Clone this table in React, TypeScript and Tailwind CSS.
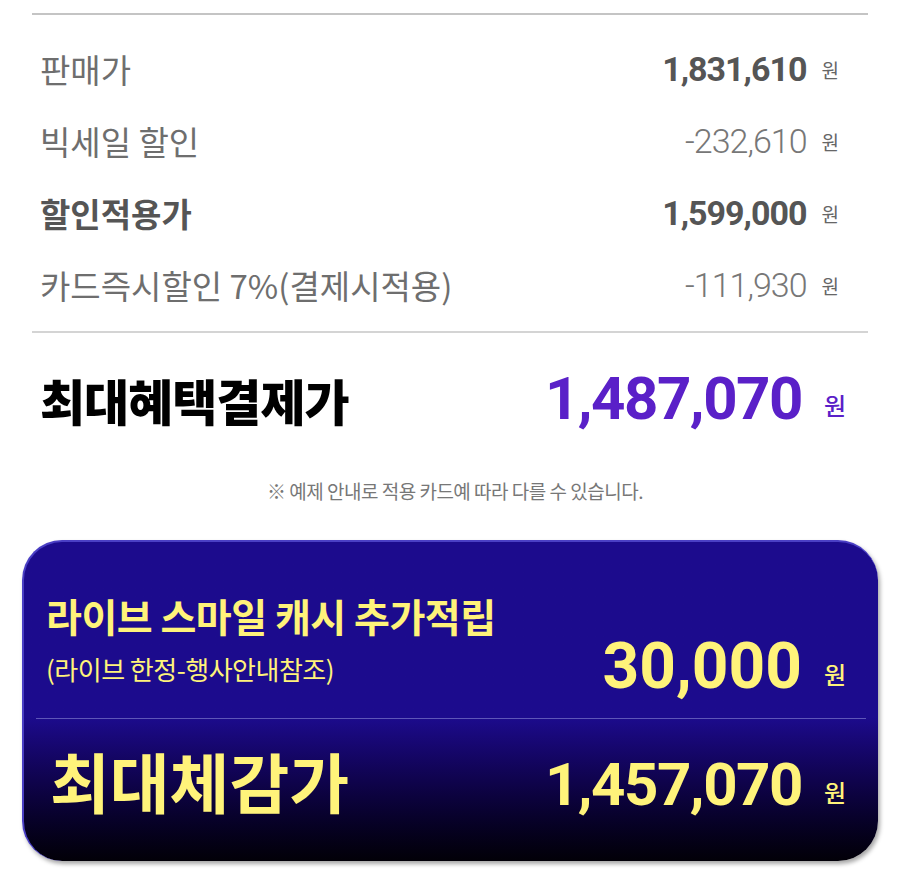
const KR = "font-['Noto_Sans_CJK_KR','Noto_Sans',sans-serif]";
const NUM = "font-['Roboto','Noto_Sans_CJK_KR',sans-serif]";

interface PriceRow {
  label: string;
  amount: string;
  strongLabel?: boolean;
  strongAmount?: boolean;
}

const rows: PriceRow[] = [
  { label: '판매가', amount: '1,831,610', strongAmount: true },
  { label: '빅세일 할인', amount: '-232,610' },
  { label: '할인적용가', amount: '1,599,000', strongLabel: true, strongAmount: true },
  { label: '카드즉시할인 7%(결제시적용)', amount: '-111,930' },
];

export default function App() {
  return (
    <div className={`w-[900px] h-[883px] bg-white overflow-hidden ${KR}`}>
      <div className="px-8 pt-[13px]">
        <div className="border-t-2 border-[#c4c4c4]" />

        <div className="pt-[18px] pb-[10px]">
          {rows.map((row) => (
            <div key={row.label} className="h-[72px] flex items-center justify-between pl-2 pr-[29px]">
              <span
                className={`text-[33px] leading-none ${
                  row.strongLabel ? 'font-bold text-[#555]' : 'text-[#6e6e6e]'
                }`}
              >
                {row.label}
              </span>
              <span className="flex items-center gap-[15px]">
                <span
                  className={`${NUM} text-[34px] leading-none tracking-[-1px] ${
                    row.strongAmount ? 'font-bold text-[#555]' : 'font-light text-[#777]'
                  }`}
                >
                  {row.amount}
                </span>
                <span className="text-[19px] leading-none text-[#666]">원</span>
              </span>
            </div>
          ))}
        </div>

        <div className="border-t-2 border-[#d4d4d4]" />

        <div className="mt-[36px] h-[60px] flex items-center justify-between pl-2 pr-[22px]">
          <span className="text-[49px] font-black leading-none text-black tracking-[-1px]">최대혜택결제가</span>
          <span className="flex items-center gap-[22px] text-[#5a20c8]">
            <span className={`${NUM} text-[60px] font-bold leading-none tracking-[-1.5px]`}>1,487,070</span>
            <span className="text-[24px] font-medium leading-none mt-[12px]">원</span>
          </span>
        </div>
      </div>

      <p className="mt-[52px] text-center text-[19px] leading-none text-[#777] tracking-[-0.5px] pl-[10px]">
        ※ 예제 안내로 적용 카드예 따라 다를 수 있습니다.
      </p>

      <div className="mx-[22px] mt-[40px] h-[321px] rounded-[40px] bg-gradient-to-b from-[#1c0b8d] from-55% to-[#020008] border-t-2 border-l-2 border-[#4a3fc4] shadow-[2px_3px_4px_rgba(0,0,0,0.35)] text-[#fff37a] flex flex-col overflow-hidden">
        <div className="h-[176px] flex justify-between px-[22px] pt-[54px]">
          <div className="flex flex-col">
            <span className="text-[39px] font-bold leading-none tracking-[-0.5px]">라이브 스마일 캐시 추가적립</span>
            <span className="mt-[21px] text-[26px] leading-none tracking-[-0.5px]">(라이브 한정-행사안내참조)</span>
          </div>
          <span className="flex items-center gap-[22px] self-end mb-[19px] pr-[10px]">
            <span className={`${NUM} text-[64px] font-bold leading-none`}>30,000</span>
            <span className="text-[24px] font-medium leading-none mt-[14px]">원</span>
          </span>
        </div>
        <div className="mx-[12px] border-t border-[#5e56b8]" />
        <div className="flex-1 flex items-center justify-between pl-[26px] pr-[32px] pb-[20px]">
          <span className="text-[65px] font-bold leading-none">최대체감가</span>
          <span className="flex items-center gap-[22px] mt-[10px]">
            <span className={`${NUM} text-[60px] font-bold leading-none tracking-[-1.5px]`}>1,457,070</span>
            <span className="text-[24px] font-medium leading-none mt-[14px]">원</span>
          </span>
        </div>
      </div>
    </div>
  );
}
